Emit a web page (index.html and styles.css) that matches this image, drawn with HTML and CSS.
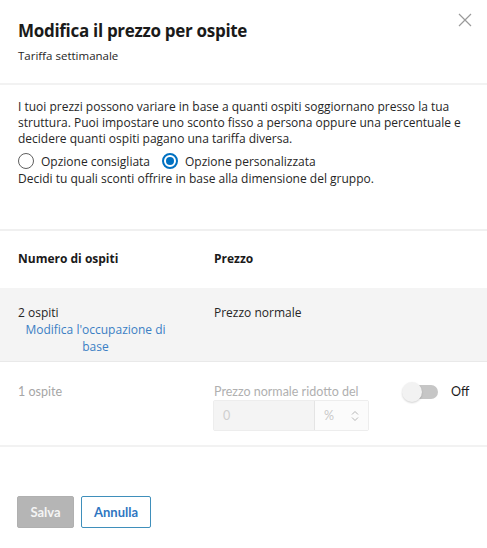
FILE: index.html
```html
<!DOCTYPE html>
<html lang="it">
<head>
<meta charset="utf-8">
<title>Modifica il prezzo per ospite</title>
<link rel="stylesheet" href="styles.css">
</head>
<body>
<div class="dialog">
  <header class="head">
    <div class="head-text">
      <h1 class="title">Modifica il prezzo per ospite</h1>
      <p class="subtitle">Tariffa settimanale</p>
    </div>
    <button class="close" aria-label="Chiudi">
      <svg width="14" height="14" viewBox="0 0 14 14"><path d="M1 1 L13 13 M13 1 L1 13" stroke="#9a9a9a" stroke-width="1.2" fill="none"/></svg>
    </button>
  </header>

  <section class="intro">
    <p class="intro-text">I tuoi prezzi possono variare in base a quanti ospiti soggiornano presso la tua struttura. Puoi impostare uno sconto fisso a persona oppure una percentuale e decidere quanti ospiti pagano una tariffa diversa.</p>
    <div class="radios">
      <label class="radio"><span class="dot"></span>Opzione consigliata</label>
      <label class="radio checked"><span class="dot"></span>Opzione personalizzata</label>
    </div>
    <p class="note">Decidi tu quali sconti offrire in base alla dimensione del gruppo.</p>
  </section>

  <div class="table">
    <div class="row thead">
      <div class="cell">Numero di ospiti</div>
      <div class="cell">Prezzo</div>
      <div class="cell"></div>
    </div>
    <div class="row base">
      <div class="cell">
        <div>2 ospiti</div>
        <a class="link" href="#">Modifica l'occupazione di base</a>
      </div>
      <div class="cell">Prezzo normale</div>
      <div class="cell"></div>
    </div>
    <div class="row muted">
      <div class="cell">1 ospite</div>
      <div class="cell">
        <div class="label">Prezzo normale ridotto del</div>
        <div class="field">
          <span class="value">0</span>
          <span class="unit">%<svg width="8" height="12" viewBox="0 0 8 12"><path d="M1 4.5 L4 1.5 L7 4.5 M1 7.5 L4 10.5 L7 7.5" stroke="#b5b5b5" stroke-width="1" fill="none"/></svg></span>
        </div>
      </div>
      <div class="cell switch-cell">
        <span class="switch"><span class="track"></span><span class="knob"></span></span>
        <span class="off">Off</span>
      </div>
    </div>
  </div>

  <footer class="actions">
    <button class="btn save">Salva</button>
    <button class="btn cancel">Annulla</button>
  </footer>
</div>
</body>
</html>
```
FILE: styles.css
```css
* { box-sizing: border-box; }
html, body { margin: 0; padding: 0; background: #fff; }
body {
  font-family: "Open Sans", "Noto Sans", sans-serif;
  color: #262626;
  font-size: 12px;
}
.dialog { width: 487px; min-height: 548px; }

.head {
  display: flex;
  justify-content: space-between;
  align-items: flex-start;
  padding: 18px 14px 19px 18px;
  border-bottom: 2px solid #f2f2f2;
}
.title {
  margin: 0;
  font-size: 17px;
  line-height: 26px;
  font-weight: 700;
  letter-spacing: -0.3px;
  color: #1a1a1a;
}
.subtitle {
  margin: 4px 0 0;
  font-size: 11.5px;
  line-height: 16px;
}
.close {
  border: 0;
  background: none;
  padding: 0;
  margin-top: -6px;
  width: 16px;
  height: 16px;
  display: flex;
  align-items: center;
  justify-content: center;
}

.intro {
  padding: 14px 18px 42px;
  border-bottom: 2px solid #f0f0f0;
}
.intro-text {
  margin: 0;
  line-height: 16px;
  width: 456px;
}
.radios {
  display: flex;
  gap: 12px;
  margin-top: 4px;
  height: 20px;
  align-items: center;
}
.radio {
  display: flex;
  align-items: center;
  gap: 7px;
}
.dot {
  width: 16px;
  height: 16px;
  border-radius: 50%;
  border: 1.5px solid #5f5f5f;
  display: inline-block;
  position: relative;
}
.checked .dot {
  border: 2px solid #0071c2;
}
.checked .dot::after {
  content: "";
  position: absolute;
  left: 2px; top: 2px;
  width: 8px; height: 8px;
  border-radius: 50%;
  background: #0071c2;
}
.note { margin: 0; line-height: 16px; }

.row {
  display: grid;
  grid-template-columns: 196px 188px 1fr;
  padding: 0 18px;
}
.thead {
  padding-top: 20px;
  padding-bottom: 21px;
  line-height: 16px;
  font-weight: 700;
  color: #1a1a1a;
}
.base {
  background: #f4f4f4;
  padding-top: 16px;
  padding-bottom: 6px;
  line-height: 17px;
  border-bottom: 1px solid #e9e9e9;
}
.link {
  display: block;
  width: 155px;
  text-align: center;
  color: #3b7fc4;
  text-decoration: none;
}
.muted {
  padding-top: 21px;
  padding-bottom: 14px;
  line-height: 17px;
  color: #a6a6a6;
  font-family: "Lato", "Open Sans", sans-serif;
  font-size: 12.5px;
  border-bottom: 2px solid #f2f2f2;
}
.muted .label { color: #b0b0b0; }
.field {
  display: flex;
  width: 156px;
  height: 31px;
  margin-left: -1px;
  border: 1px solid #ededed;
  border-radius: 2px;
}
.value {
  width: 101px;
  background: #f4f4f4;
  border-right: 1px solid #e4e4e4;
  padding-left: 9px;
  line-height: 29px;
  color: #cfcfcf;
}
.unit {
  flex: 1;
  display: flex;
  align-items: center;
  justify-content: space-between;
  padding: 0 9px 0 9px;
  background: #fbfbfb;
  color: #c9c9c9;
}
.switch-cell {
  display: flex;
  align-items: flex-start;
  gap: 13px;
  margin-top: -1px;
}
.switch {
  position: relative;
  width: 36px;
  height: 20px;
  display: inline-block;
  flex: none;
}
.track {
  position: absolute;
  left: 6px; top: 3px;
  width: 30px; height: 14px;
  border-radius: 7px;
  background: #c6c6c6;
}
.knob {
  position: absolute;
  left: 0; top: 0;
  width: 20px; height: 20px;
  border-radius: 50%;
  background: #f2f2f2;
  box-shadow: 0 1px 2px rgba(0,0,0,0.18);
}
.off {
  color: #1a1a1a;
  line-height: 20px;
  font-family: "Lato", sans-serif;
  font-size: 12.5px;
}

.actions {
  display: flex;
  gap: 7px;
  padding: 49px 17px 0;
}
.btn {
  height: 32px;
  border-radius: 2px;
  font-family: "Lato", sans-serif;
  font-weight: 700;
  font-size: 13px;
  padding: 0;
}
.save {
  width: 57px;
  background: #b5b5b5;
  border: 1px solid #b0b0b0;
  color: #f4f4f4;
}
.cancel {
  width: 70px;
  background: #fff;
  border: 1px solid #3f8fbb;
  color: #2f76c1;
}
```
